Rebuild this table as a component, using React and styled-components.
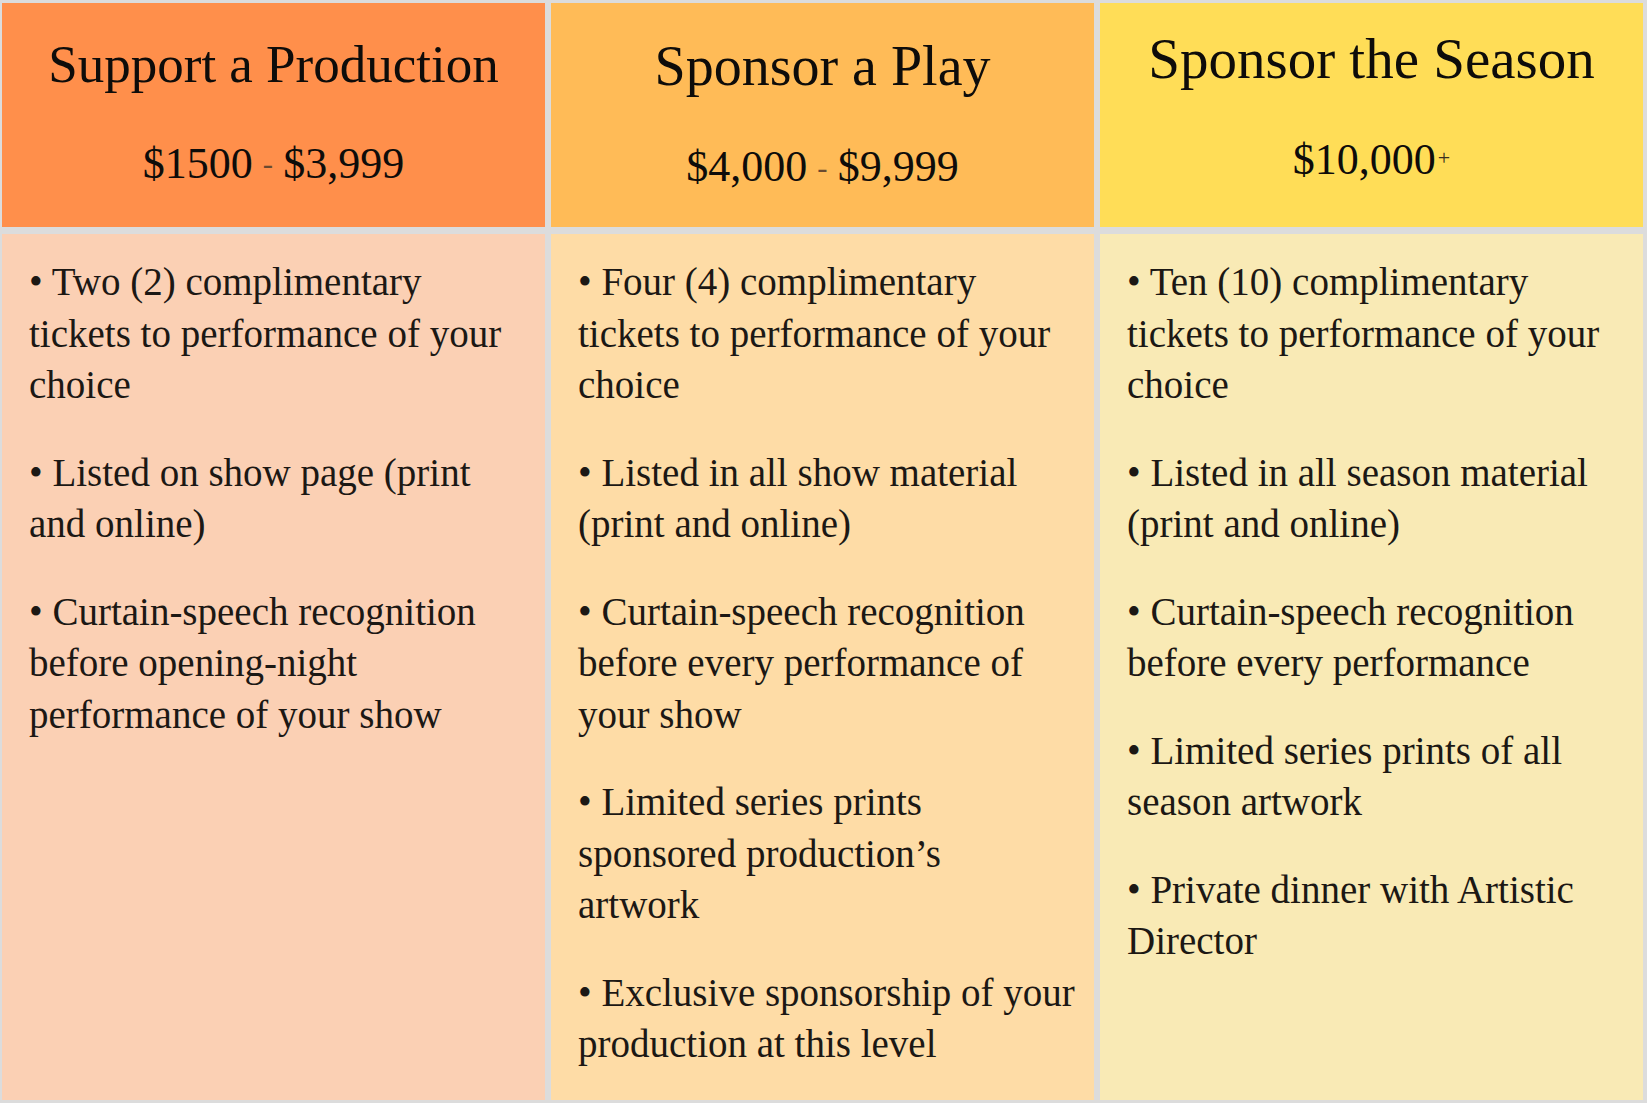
import React from 'react'
import styled, { createGlobalStyle } from 'styled-components'

const GlobalStyle = createGlobalStyle`
  html, body {
    margin: 0;
    padding: 0;
    background: #dcdcdc;
  }
  * { box-sizing: border-box; }
`;

const Board = styled.main`
  height: 1103px;
  padding: 3px 4px 3px 2px;
  display: grid;
  grid-template-columns: repeat(3, 1fr);
  column-gap: 6px;
  font-family: "Liberation Serif", "Times New Roman", serif;
  color: #1c1814;
`;

const Tier = styled.section`
  display: flex;
  flex-direction: column;
  gap: 7px;
  min-width: 0;
`;

const Head = styled.header`
  height: 224px;
  flex: none;
  background: ${p => p.$bg};
  padding-top: ${p => p.$top}px;
  display: flex;
  flex-direction: column;
  align-items: center;
  gap: 41px;
  text-align: center;
`;

const Title = styled.h2`
  margin: 0;
  font-weight: 400;
  font-size: ${p => p.$size}px;
  line-height: 1.2;
  color: #0e0c0a;
  white-space: nowrap;
`;

const Price = styled.div`
  font-size: 44px;
  line-height: 1.2;
  color: #0e0c0a;
  white-space: nowrap;
`;

const Dash = styled.span`
  font-size: 0.7em;
  color: #6a4a30;
  margin: 0 10px;
  vertical-align: 0.12em;
`;

const Plus = styled.span`
  font-size: 0.5em;
  color: #3a2e20;
  margin-left: 2px;
  vertical-align: 0.45em;
`;

const Body = styled.div`
  flex: 1;
  background: ${p => p.$bg};
  padding: 22px 16px 0 27px;
  display: flex;
  flex-direction: column;
  gap: 36px;
`;

const Perk = styled.p`
  margin: 0;
  font-size: 39px;
  line-height: 51.5px;
`;

const Line = styled.span`
  display: block;
  white-space: nowrap;
`;

const tiers = [
  {
    title: 'Support a Production',
    size: 53,
    top: 30,
    from: '$1500',
    to: '$3,999',
    head: '#ff8f4b',
    body: '#fbd0b4',
    perks: [
      ['• Two (2) complimentary', 'tickets to performance of your', 'choice'],
      ['• Listed on show page (print', 'and online)'],
      ['• Curtain-speech recognition', 'before opening-night', 'performance of your show'],
    ],
  },
  {
    title: 'Sponsor a Play',
    size: 56,
    top: 30,
    from: '$4,000',
    to: '$9,999',
    head: '#ffbb57',
    body: '#fedca6',
    perks: [
      ['• Four (4) complimentary', 'tickets to performance of your', 'choice'],
      ['• Listed in all show material', '(print and online)'],
      ['• Curtain-speech recognition', 'before every performance of', 'your show'],
      ['• Limited series prints', 'sponsored production’s', 'artwork'],
      ['• Exclusive sponsorship of your', 'production at this level'],
    ],
  },
  {
    title: 'Sponsor the Season',
    size: 57,
    top: 22,
    from: '$10,000',
    plus: true,
    head: '#ffdd57',
    body: '#f9eab5',
    perks: [
      ['• Ten (10) complimentary', 'tickets to performance of your', 'choice'],
      ['• Listed in all season material', '(print and online)'],
      ['• Curtain-speech recognition', 'before every performance'],
      ['• Limited series prints of all', 'season artwork'],
      ['• Private dinner with Artistic', 'Director'],
    ],
  },
];

export default function App() {
  return (
    <>
      <GlobalStyle />
      <Board>
        {tiers.map(t => (
          <Tier key={t.title}>
            <Head $bg={t.head} $top={t.top}>
              <Title $size={t.size}>{t.title}</Title>
              <Price>
                {t.from}
                {t.to && <><Dash>-</Dash>{t.to}</>}
                {t.plus && <Plus>+</Plus>}
              </Price>
            </Head>
            <Body $bg={t.body}>
              {t.perks.map((lines, i) => (
                <Perk key={i}>
                  {lines.map(l => <Line key={l}>{l}</Line>)}
                </Perk>
              ))}
            </Body>
          </Tier>
        ))}
      </Board>
    </>
  );
}
